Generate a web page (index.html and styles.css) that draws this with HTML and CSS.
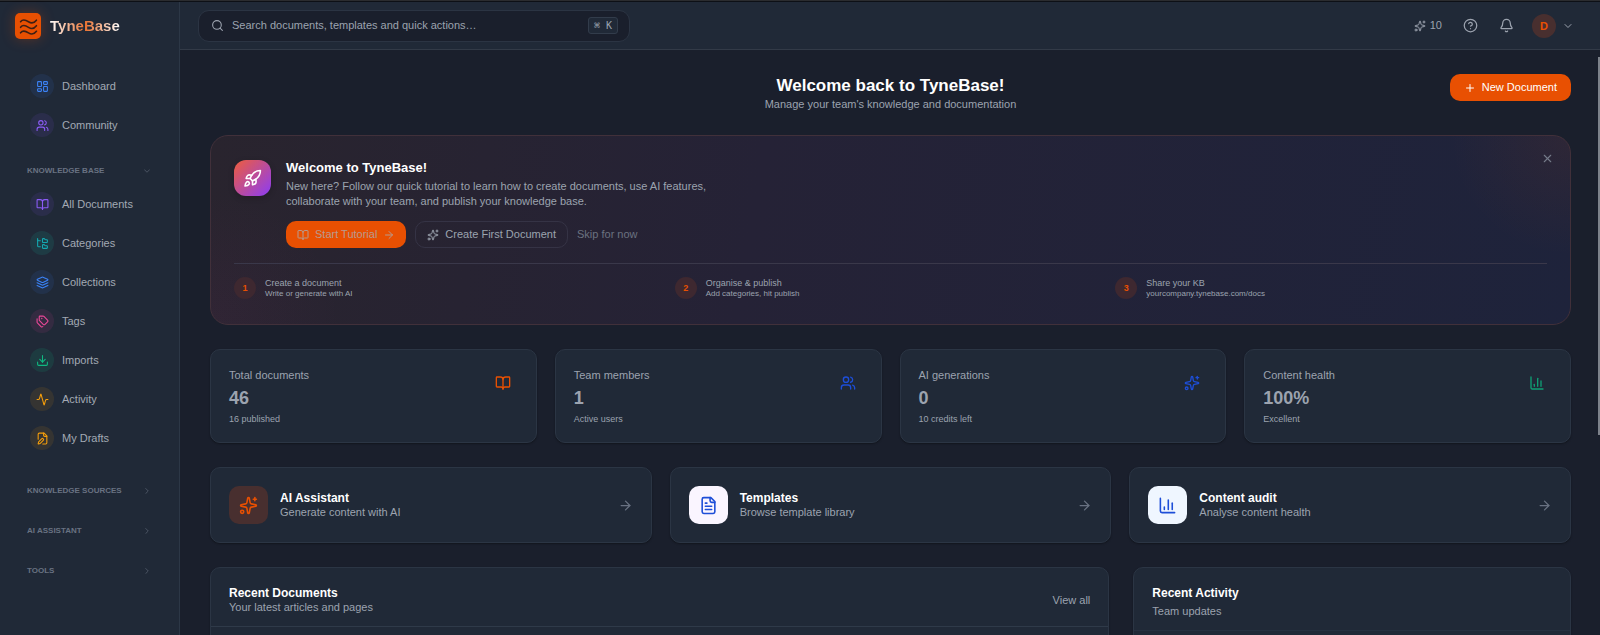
FILE: index.html
```
<!DOCTYPE html>
<html lang="en">
<head>
    <meta charset="UTF-8">
    <meta name="viewport" content="width=device-width, initial-scale=1.0">
    <title>TyneBase | Dashboard</title>
    <link rel="stylesheet" href="styles.css">
</head>
<body>
    <!-- icon set -->
    <svg class="sprite" aria-hidden="true">
        <symbol id="i-dashboard" viewBox="0 0 24 24"><rect width="7" height="9" x="3" y="3" rx="1"/><rect width="7" height="5" x="14" y="3" rx="1"/><rect width="7" height="9" x="14" y="12" rx="1"/><rect width="7" height="5" x="3" y="16" rx="1"/></symbol>
        <symbol id="i-users" viewBox="0 0 24 24"><path d="M16 21v-2a4 4 0 0 0-4-4H6a4 4 0 0 0-4 4v2"/><circle cx="9" cy="7" r="4"/><path d="M22 21v-2a4 4 0 0 0-3-3.87"/><path d="M16 3.13a4 4 0 0 1 0 7.75"/></symbol>
        <symbol id="i-book" viewBox="0 0 24 24"><path d="M12 7v14"/><path d="M3 18a1 1 0 0 1-1-1V4a1 1 0 0 1 1-1h5a4 4 0 0 1 4 4 4 4 0 0 1 4-4h5a1 1 0 0 1 1 1v13a1 1 0 0 1-1 1h-6a3 3 0 0 0-3 3 3 3 0 0 0-3-3z"/></symbol>
        <symbol id="i-tree" viewBox="0 0 24 24"><path d="M20 10a1 1 0 0 0 1-1V6a1 1 0 0 0-1-1h-2.5a1 1 0 0 1-.8-.4l-.9-1.2A1 1 0 0 0 15 3h-2a1 1 0 0 0-1 1v5a1 1 0 0 0 1 1Z"/><path d="M20 21a1 1 0 0 0 1-1v-3a1 1 0 0 0-1-1h-2.9a1 1 0 0 1-.88-.55l-.42-.85a1 1 0 0 0-.92-.6H13a1 1 0 0 0-1 1v5a1 1 0 0 0 1 1Z"/><path d="M3 5a2 2 0 0 0 2 2h3"/><path d="M3 3v13a2 2 0 0 0 2 2h3"/></symbol>
        <symbol id="i-layers" viewBox="0 0 24 24"><path d="M12.83 2.18a2 2 0 0 0-1.66 0L2.6 6.08a1 1 0 0 0 0 1.83l8.58 3.91a2 2 0 0 0 1.66 0l8.58-3.9a1 1 0 0 0 0-1.83Z"/><path d="m22 12.5-9.17 4.16a2 2 0 0 1-1.66 0L2 12.5"/><path d="m22 17.5-9.17 4.16a2 2 0 0 1-1.66 0L2 17.5"/></symbol>
        <symbol id="i-tags" viewBox="0 0 24 24"><path d="M13.172 2a2 2 0 0 1 1.414.586l6.71 6.71a2.4 2.4 0 0 1 0 3.408l-4.592 4.592a2.4 2.4 0 0 1-3.408 0l-6.71-6.71A2 2 0 0 1 6 9.172V3a1 1 0 0 1 1-1z"/><path d="M2 7v6.172a2 2 0 0 0 .586 1.414l6.71 6.71a2.4 2.4 0 0 0 3.191.193"/><circle cx="10.5" cy="6.5" r=".5"/></symbol>
        <symbol id="i-download" viewBox="0 0 24 24"><path d="M21 15v4a2 2 0 0 1-2 2H5a2 2 0 0 1-2-2v-4"/><path d="m7 10 5 5 5-5"/><path d="M12 15V3"/></symbol>
        <symbol id="i-activity" viewBox="0 0 24 24"><path d="M22 12h-2.48a2 2 0 0 0-1.93 1.46l-2.35 8.36a.25.25 0 0 1-.48 0L9.24 2.18a.25.25 0 0 0-.48 0l-2.35 8.36A2 2 0 0 1 4.49 12H2"/></symbol>
        <symbol id="i-draft" viewBox="0 0 24 24"><path d="M12.5 22H18a2 2 0 0 0 2-2V7l-5-5H6a2 2 0 0 0-2 2v9.5"/><path d="M14 2v4a2 2 0 0 0 2 2h4"/><path d="M13.378 15.626a1 1 0 1 0-3.004-3.004l-5.01 5.012a2 2 0 0 0-.506.854l-.837 2.87a.5.5 0 0 0 .62.62l2.87-.837a2 2 0 0 0 .854-.506z"/></symbol>
        <symbol id="i-sparkles" viewBox="0 0 24 24"><path d="M11.017 2.814a1 1 0 0 1 1.966 0l1.051 5.558a2 2 0 0 0 1.594 1.594l5.558 1.051a1 1 0 0 1 0 1.966l-5.558 1.051a2 2 0 0 0-1.594 1.594l-1.051 5.558a1 1 0 0 1-1.966 0l-1.051-5.558a2 2 0 0 0-1.594-1.594l-5.558-1.051a1 1 0 0 1 0-1.966l5.558-1.051a2 2 0 0 0 1.594-1.594z"/><path d="M20 2v4"/><path d="M22 4h-4"/><circle cx="4" cy="20" r="2"/></symbol>
        <symbol id="i-rocket" viewBox="0 0 24 24"><path d="M4.5 16.5c-1.5 1.26-2 5-2 5s3.74-.5 5-2c.71-.84.7-2.13-.09-2.91a2.18 2.18 0 0 0-2.91-.09z"/><path d="m12 15-3-3a22 22 0 0 1 2-3.95A12.88 12.88 0 0 1 22 2c0 2.72-.78 7.5-6 11a22.35 22.35 0 0 1-4 2z"/><path d="M9 12H4s.55-3.03 2-4c1.62-1.08 5 0 5 0"/><path d="M12 15v5s3.03-.55 4-2c1.08-1.62 0-5 0-5"/></symbol>
        <symbol id="i-file" viewBox="0 0 24 24"><path d="M15 2H6a2 2 0 0 0-2 2v16a2 2 0 0 0 2 2h12a2 2 0 0 0 2-2V7Z"/><path d="M14 2v4a2 2 0 0 0 2 2h4"/><path d="M10 9H8"/><path d="M16 13H8"/><path d="M16 17H8"/></symbol>
        <symbol id="i-chart" viewBox="0 0 24 24"><path d="M3 3v16a2 2 0 0 0 2 2h16"/><path d="M18 17V9"/><path d="M13 17V5"/><path d="M8 17v-3"/></symbol>
        <symbol id="i-search" viewBox="0 0 24 24"><circle cx="11" cy="11" r="8"/><path d="m21 21-4.34-4.34"/></symbol>
        <symbol id="i-help" viewBox="0 0 24 24"><circle cx="12" cy="12" r="10"/><path d="M9.09 9a3 3 0 0 1 5.83 1c0 2-3 3-3 3"/><path d="M12 17h.01"/></symbol>
        <symbol id="i-bell" viewBox="0 0 24 24"><path d="M10.268 21a2 2 0 0 0 3.464 0"/><path d="M3.262 15.326A1 1 0 0 0 4 17h16a1 1 0 0 0 .74-1.673C19.41 13.956 18 12.499 18 8A6 6 0 0 0 6 8c0 4.499-1.411 5.956-2.738 7.326"/></symbol>
        <symbol id="i-down" viewBox="0 0 24 24"><path d="m6 9 6 6 6-6"/></symbol>
        <symbol id="i-right" viewBox="0 0 24 24"><path d="m9 18 6-6-6-6"/></symbol>
        <symbol id="i-arrow" viewBox="0 0 24 24"><path d="M5 12h14"/><path d="m12 5 7 7-7 7"/></symbol>
        <symbol id="i-plus" viewBox="0 0 24 24"><path d="M5 12h14"/><path d="M12 5v14"/></symbol>
        <symbol id="i-close" viewBox="0 0 24 24"><path d="M18 6 6 18"/><path d="m6 6 12 12"/></symbol>
        <symbol id="i-waves" viewBox="0 0 24 24"><path d="M2 6c3-4 7-2 10 0s7 2 10-2"/><path d="M2 13c3-4 7-2 10 0s7 2 10-2"/><path d="M2 20c3-4 7-2 10 0s7 2 10-2"/></symbol>
    </svg>

    <div class="app">
        <aside class="sidebar">
            <a href="#" class="brand">
                <span class="brand-mark"><svg class="icon icon-lg"><use href="#i-waves"/></svg></span>
                <span class="brand-name">TyneBase</span>
            </a>

            <nav class="nav">
                <a href="#" class="nav-item"><span class="dot blue"><svg class="icon icon-nav"><use href="#i-dashboard"/></svg></span>Dashboard</a>
                <a href="#" class="nav-item"><span class="dot purple"><svg class="icon icon-nav"><use href="#i-users"/></svg></span>Community</a>

                <button type="button" class="nav-head first">Knowledge Base <svg class="icon icon-xs"><use href="#i-down"/></svg></button>
                <a href="#" class="nav-item"><span class="dot purple"><svg class="icon icon-nav"><use href="#i-book"/></svg></span>All Documents</a>
                <a href="#" class="nav-item"><span class="dot teal"><svg class="icon icon-nav"><use href="#i-tree"/></svg></span>Categories</a>
                <a href="#" class="nav-item"><span class="dot blue"><svg class="icon icon-nav"><use href="#i-layers"/></svg></span>Collections</a>
                <a href="#" class="nav-item"><span class="dot pink"><svg class="icon icon-nav"><use href="#i-tags"/></svg></span>Tags</a>
                <a href="#" class="nav-item"><span class="dot green"><svg class="icon icon-nav"><use href="#i-download"/></svg></span>Imports</a>
                <a href="#" class="nav-item"><span class="dot amber"><svg class="icon icon-nav"><use href="#i-activity"/></svg></span>Activity</a>
                <a href="#" class="nav-item"><span class="dot amber"><svg class="icon icon-nav"><use href="#i-draft"/></svg></span>My Drafts</a>

                <div class="nav-closed">
                    <button type="button" class="nav-head">Knowledge Sources <svg class="icon icon-xs"><use href="#i-right"/></svg></button>
                    <button type="button" class="nav-head">AI Assistant <svg class="icon icon-xs"><use href="#i-right"/></svg></button>
                    <button type="button" class="nav-head">Tools <svg class="icon icon-xs"><use href="#i-right"/></svg></button>
                </div>
            </nav>
        </aside>

        <div class="page">
            <header class="topbar">
                <label class="search">
                    <svg class="icon icon-nav"><use href="#i-search"/></svg>
                    <input type="text" placeholder="Search documents, templates and quick actions…" aria-label="Search">
                    <kbd>⌘ K</kbd>
                </label>
                <div class="tools">
                    <a href="#" class="credits"><svg class="icon"><use href="#i-sparkles"/></svg>10</a>
                    <button type="button" class="tool" aria-label="Help"><svg class="icon icon-md"><use href="#i-help"/></svg></button>
                    <button type="button" class="tool" aria-label="Notifications"><svg class="icon icon-md"><use href="#i-bell"/></svg></button>
                    <button type="button" class="user" aria-label="Account"><span class="avatar">D</span><svg class="icon"><use href="#i-down"/></svg></button>
                </div>
            </header>

            <main class="content">
                <div class="page-head">
                    <div class="page-title">
                        <h1>Welcome back to TyneBase!</h1>
                        <p>Manage your team's knowledge and documentation</p>
                    </div>
                    <button type="button" class="btn btn-new"><svg class="icon"><use href="#i-plus"/></svg>New Document</button>
                </div>

                <section class="welcome">
                    <button type="button" class="close" aria-label="Close"><svg class="icon icon-nav"><use href="#i-close"/></svg></button>
                    <div class="welcome-top">
                        <div class="rocket"><svg class="icon icon-lg"><use href="#i-rocket"/></svg></div>
                        <div class="welcome-body">
                            <h2>Welcome to TyneBase!</h2>
                            <p>New here? Follow our quick tutorial to learn how to create documents, use AI features, collaborate with your team, and publish your knowledge base.</p>
                            <div class="welcome-btns">
                                <button type="button" class="btn btn-start"><svg class="icon"><use href="#i-book"/></svg>Start Tutorial<svg class="icon"><use href="#i-arrow"/></svg></button>
                                <button type="button" class="btn btn-line"><svg class="icon"><use href="#i-sparkles"/></svg>Create First Document</button>
                                <button type="button" class="btn-skip">Skip for now</button>
                            </div>
                        </div>
                    </div>
                    <ol class="steps">
                        <li><span class="num">1</span><div><h3>Create a document</h3><p>Write or generate with AI</p></div></li>
                        <li><span class="num">2</span><div><h3>Organise &amp; publish</h3><p>Add categories, hit publish</p></div></li>
                        <li><span class="num">3</span><div><h3>Share your KB</h3><p>yourcompany.tynebase.com/docs</p></div></li>
                    </ol>
                </section>

                <section class="stats">
                    <div class="card stat">
                        <div><p class="label">Total documents</p><p class="value">46</p><p class="note">16 published</p></div>
                        <span class="stat-icon c-orange"><svg class="icon icon-stat"><use href="#i-book"/></svg></span>
                    </div>
                    <div class="card stat">
                        <div><p class="label">Team members</p><p class="value">1</p><p class="note">Active users</p></div>
                        <span class="stat-icon c-blue"><svg class="icon icon-stat"><use href="#i-users"/></svg></span>
                    </div>
                    <div class="card stat">
                        <div><p class="label">AI generations</p><p class="value">0</p><p class="note">10 credits left</p></div>
                        <span class="stat-icon c-blue"><svg class="icon icon-stat"><use href="#i-sparkles"/></svg></span>
                    </div>
                    <div class="card stat">
                        <div><p class="label">Content health</p><p class="value">100%</p><p class="note">Excellent</p></div>
                        <span class="stat-icon c-green"><svg class="icon icon-stat"><use href="#i-chart"/></svg></span>
                    </div>
                </section>

                <section class="actions">
                    <a href="#" class="card action">
                        <span class="tile tile-orange"><svg class="icon icon-lg"><use href="#i-sparkles"/></svg></span>
                        <div><h3>AI Assistant</h3><p>Generate content with AI</p></div>
                        <svg class="icon icon-md go"><use href="#i-arrow"/></svg>
                    </a>
                    <a href="#" class="card action">
                        <span class="tile tile-violet"><svg class="icon icon-lg"><use href="#i-file"/></svg></span>
                        <div><h3>Templates</h3><p>Browse template library</p></div>
                        <svg class="icon icon-md go"><use href="#i-arrow"/></svg>
                    </a>
                    <a href="#" class="card action">
                        <span class="tile tile-blue"><svg class="icon icon-lg"><use href="#i-chart"/></svg></span>
                        <div><h3>Content audit</h3><p>Analyse content health</p></div>
                        <svg class="icon icon-md go"><use href="#i-arrow"/></svg>
                    </a>
                </section>

                <section class="panels">
                    <div class="card panel wide">
                        <div class="panel-head">
                            <div><h3>Recent Documents</h3><p>Your latest articles and pages</p></div>
                            <a href="#">View all</a>
                        </div>
                    </div>
                    <div class="card panel">
                        <div class="panel-head loose">
                            <div><h3>Recent Activity</h3><p>Team updates</p></div>
                        </div>
                    </div>
                </section>
            </main>
            <div class="scroll-thumb"></div>
        </div>
    </div>
</body>
</html>
```
FILE: styles.css
```
* {
    box-sizing: border-box;
    margin: 0;
    padding: 0;
}

body {
    background-color: #1a1f2c;
    font-family: "Liberation Sans", Arial, Helvetica, sans-serif;
    font-size: 11px;
    line-height: 15px;
    color: #9ca3af;
    overflow: hidden;
}

a {
    color: inherit;
    text-decoration: none;
}

button {
    font: inherit;
    color: inherit;
    background: none;
    border: none;
    cursor: pointer;
}

h1, h2, h3 {
    color: white;
}

.sprite {
    display: none;
}

/* icons */
.icon {
    width: 12px;
    height: 12px;
    flex-shrink: 0;
    fill: none;
    stroke: currentColor;
    stroke-width: 2;
    stroke-linecap: round;
    stroke-linejoin: round;
}

.icon-xs {
    width: 10px;
    height: 10px;
    opacity: 0.7;
}

.icon-nav {
    width: 13px;
    height: 13px;
}

.icon-md {
    width: 15px;
    height: 15px;
}

.icon-stat {
    width: 16px;
    height: 16px;
}

.icon-lg {
    width: 19px;
    height: 19px;
}

.app {
    display: flex;
    height: 100vh;
    border-top: 1px solid #2b2c2f;
    box-shadow: inset 0 1px #0d1016;
}

/* sidebar */
.sidebar {
    width: 180px;
    flex-shrink: 0;
    margin-top: 1px;
    background-color: #202937;
    border-right: 1px solid #2c3746;
}

.brand {
    display: flex;
    align-items: center;
    gap: 9px;
    height: 48px;
    padding-left: 15px;
}

.brand-mark {
    display: grid;
    place-items: center;
    width: 26px;
    height: 26px;
    border-radius: 5px;
    background-color: #e85002;
    color: #3d1f14;
    box-shadow: 0 0 14px rgba(232, 80, 2, 0.3);
}

.brand-name {
    font-size: 15px;
    font-weight: bold;
    line-height: 20px;
    background: linear-gradient(90deg, #ffffff, #e8702f 50%, #ffffff);
    -webkit-background-clip: text;
    background-clip: text;
    color: transparent;
}

.nav {
    padding: 18px 27px 0;
}

.nav-item {
    display: flex;
    align-items: center;
    gap: 8px;
    height: 36px;
    margin-bottom: 3px;
    padding-left: 3px;
    white-space: nowrap;
    color: #a3a9b4;
}

.dot {
    display: grid;
    place-items: center;
    width: 24px;
    height: 24px;
    border-radius: 50%;
}

.blue {
    color: #3b82f6;
    background-color: rgba(59, 130, 246, 0.1);
}

.purple {
    color: #8b5cf6;
    background-color: rgba(139, 92, 246, 0.1);
}

.teal {
    color: #14a8b0;
    background-color: rgba(20, 184, 166, 0.13);
}

.pink {
    color: #ec4899;
    background-color: rgba(236, 72, 153, 0.1);
}

.green {
    color: #10b981;
    background-color: rgba(16, 185, 129, 0.13);
}

.amber {
    color: #f59e0b;
    background-color: rgba(245, 158, 11, 0.1);
}

.nav-head {
    display: flex;
    align-items: center;
    justify-content: space-between;
    width: 100%;
    height: 40px;
    font-size: 8px;
    font-weight: bold;
    line-height: 12px;
    text-transform: uppercase;
    color: #697282;
}

.nav-head.first {
    height: 24px;
    margin: 16px 0 3px;
}

.nav-closed {
    padding-top: 12px;
}

/* top bar */
.page {
    position: relative;
    flex: 1;
    min-width: 0;
    margin-top: 1px;
}

.topbar {
    display: flex;
    align-items: center;
    justify-content: space-between;
    height: 48px;
    padding: 0 26px 0 18px;
    background-color: #202937;
    border-bottom: 1px solid #323a47;
}

.search {
    display: flex;
    align-items: center;
    gap: 8px;
    width: 432px;
    height: 32px;
    padding: 0 11px 0 12px;
    border: 1px solid #2b3443;
    border-radius: 11px;
    background-color: #1a1f2c;
}

.search input {
    flex: 1;
    min-width: 0;
    border: none;
    outline: none;
    background: none;
    font: inherit;
    color: #9ca3af;
}

.search input::placeholder {
    color: #9ca3af;
    opacity: 1;
}

kbd {
    padding: 0 5px;
    border: 1px solid #323c4b;
    border-radius: 3px;
    background-color: #202937;
    font-family: "DejaVu Sans Mono", monospace;
    font-size: 10px;
}

.tools {
    display: flex;
    align-items: center;
    gap: 21px;
}

.credits {
    display: flex;
    align-items: center;
    gap: 4px;
}

.tool {
    display: flex;
}

.user {
    display: flex;
    align-items: center;
    gap: 6px;
    margin-left: -3px;
}

.avatar {
    width: 24px;
    height: 24px;
    border-radius: 50%;
    background-color: #482f2f;
    color: #e85002;
    font-weight: bold;
    line-height: 24px;
}

/* content */
.content {
    padding: 24px 29px 0 30px;
}

.page-head {
    display: grid;
    grid-template-columns: 1fr auto 1fr;
    align-items: start;
    margin-bottom: 23px;
}

.page-title {
    grid-column: 2;
    text-align: center;
}

h1 {
    font-size: 17px;
    line-height: 23px;
}

.btn {
    display: flex;
    align-items: center;
    gap: 6px;
    height: 27px;
    padding: 0 12px;
    border-radius: 10px;
    white-space: nowrap;
}

.btn-new {
    justify-self: end;
    padding: 0 14px;
    background-color: #e85002;
    color: white;
}

.welcome {
    position: relative;
    margin-bottom: 24px;
    padding: 24px 23px 25px;
    border: 1px solid #41303a;
    border-radius: 18px;
    background:
        radial-gradient(circle at 100% 0, rgba(232, 80, 2, 0.08), transparent 120px),
        radial-gradient(circle at 0 100%, rgba(168, 50, 150, 0.06), transparent 130px),
        linear-gradient(100deg, #29242e, #252236 40%, #1e233b);
}

.close {
    position: absolute;
    top: 16px;
    right: 16px;
    display: flex;
    color: #757b8a;
}

.welcome-top {
    display: flex;
    gap: 15px;
    padding-bottom: 15px;
    border-bottom: 1px solid #3a384a;
}

.rocket {
    display: grid;
    place-items: center;
    width: 37px;
    height: 36px;
    flex-shrink: 0;
    border-radius: 12px;
    background: linear-gradient(135deg, #ef5d3c, #8b3cf6);
    color: white;
    box-shadow: 0 2px 6px rgba(0, 0, 0, 0.2);
}

h2 {
    font-size: 13px;
    line-height: 16px;
}

.welcome-body p {
    max-width: 430px;
    margin: 3px 0 12px;
}

.welcome-btns {
    display: flex;
    align-items: center;
    gap: 9px;
}

.btn-start {
    padding: 0 11px;
    background-color: #e85002;
    color: #b79a8e;
}

.btn-line {
    padding: 0 11px;
    border: 1px solid #353345;
}

.btn-skip {
    color: #6b7280;
}

.steps {
    display: grid;
    grid-template-columns: repeat(3, 1fr);
    gap: 9px;
    padding-top: 13px;
    list-style: none;
}

.steps li {
    display: flex;
    align-items: center;
    gap: 9px;
}

.num {
    width: 22px;
    height: 22px;
    border-radius: 50%;
    background-color: #3e2830;
    color: #e85002;
    font-size: 9px;
    font-weight: bold;
    line-height: 22px;
    text-align: center;
}

.steps h3 {
    font-size: 9px;
    font-weight: normal;
    line-height: 12px;
    color: #9ca3af;
}

.steps p {
    font-size: 8px;
    line-height: 10px;
}

.card {
    border: 1px solid #2b3544;
    border-radius: 10px;
    background-color: #202937;
    box-shadow: 0 1px 2px rgba(0, 0, 0, 0.35);
}

.stats {
    display: grid;
    grid-template-columns: repeat(4, 1fr);
    gap: 18px;
    margin-bottom: 24px;
}

.stat {
    display: flex;
    justify-content: space-between;
    padding: 18px 18px 17px;
}

.value {
    margin: 3px 0;
    font-size: 18px;
    font-weight: bold;
    line-height: 24px;
}

.note {
    font-size: 9px;
    line-height: 12px;
}

.stat-icon {
    display: grid;
    place-items: center;
    width: 30px;
    height: 30px;
}

.c-orange {
    color: #e85002;
}

.c-blue {
    color: #1d4ed8;
}

.c-green {
    color: #0f9f74;
}

.actions {
    display: grid;
    grid-template-columns: repeat(3, 1fr);
    gap: 18px;
    margin-bottom: 24px;
}

.action {
    display: flex;
    align-items: center;
    gap: 12px;
    padding: 18px;
}

.tile {
    display: grid;
    place-items: center;
    width: 39px;
    height: 38px;
    border-radius: 10px;
}

.tile-orange {
    background-color: #482f2f;
    color: #e85002;
}

.tile-violet {
    background-color: #faf5ff;
    color: #1d4ed8;
}

.tile-blue {
    background-color: #eff6ff;
    color: #1d4ed8;
}

.card h3 {
    font-size: 12px;
    line-height: 14px;
}

.card h3 + p {
    line-height: 14px;
}

.go {
    margin-left: auto;
    color: #697282;
}

.panels {
    display: grid;
    grid-template-columns: repeat(3, 1fr);
    gap: 24px;
}

.panel {
    height: 300px;
}

.wide {
    grid-column: span 2;
}

.panel-head {
    display: flex;
    align-items: center;
    justify-content: space-between;
    padding: 18px 18px 12px;
    border-bottom: 1px solid #2f3a49;
}

.loose {
    border-bottom-color: #263040;
}

.loose h3 {
    margin-bottom: 4px;
}

.scroll-thumb {
    position: absolute;
    top: 55px;
    right: 0;
    width: 2px;
    height: 378px;
    background-color: #7d828b;
}
```
